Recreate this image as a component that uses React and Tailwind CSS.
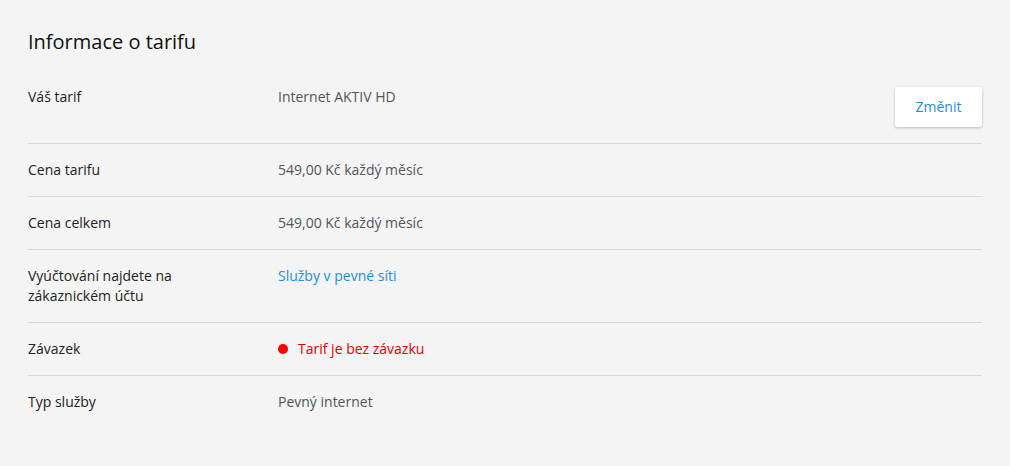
import React from "react";

const rows = [
  { label: "Váš tarif", value: "Internet AKTIV HD", button: true },
  { label: "Cena tarifu", value: "549,00 Kč každý měsíc" },
  { label: "Cena celkem", value: "549,00 Kč každý měsíc" },
  {
    label: "Vyúčtování najdete na zákaznickém účtu",
    value: "Služby v pevné síti",
    link: true,
  },
  { label: "Závazek", value: "Tarif je bez závazku", alert: true },
  { label: "Typ služby", value: "Pevný internet" },
];

const App = () => {
  return (
    <div
      className="min-h-screen w-full bg-[#f4f4f4] px-7 pt-7 pb-10 text-[#222]"
      style={{ fontFamily: '"Open Sans", "Liberation Sans", sans-serif' }}
    >
      <h1 className="text-[20px] leading-[28px] font-normal text-[#111] mb-[15px]">
        Informace o tarifu
      </h1>
      <div>
        {rows.map((row, index) => (
          <div
            key={index}
            className={`flex items-start py-4 text-[14px] leading-[20px] ${
              index < rows.length - 1 ? "border-b border-[#d9d9d9]" : ""
            }`}
          >
            <div className="w-[250px] shrink-0 pr-[70px] text-[#222]">
              {row.label}
            </div>
            <div className="flex-1">
              {row.link ? (
                <a href="#" className="text-[#1a8ee0]">
                  {row.value}
                </a>
              ) : row.alert ? (
                <span className="flex items-center gap-[10px] text-[#e00000]">
                  <span className="inline-block h-[10px] w-[10px] rounded-full bg-[#ff0000]"></span>
                  {row.value}
                </span>
              ) : (
                <span className="text-[#555]">{row.value}</span>
              )}
            </div>
            {row.button && (
              <button className="h-[40px] w-[87px] rounded-[3px] bg-white text-[14px] text-[#1a8ee0] shadow-[0_1px_3px_rgba(0,0,0,0.25)]">
                Změnit
              </button>
            )}
          </div>
        ))}
      </div>
    </div>
  );
};

export default App;
